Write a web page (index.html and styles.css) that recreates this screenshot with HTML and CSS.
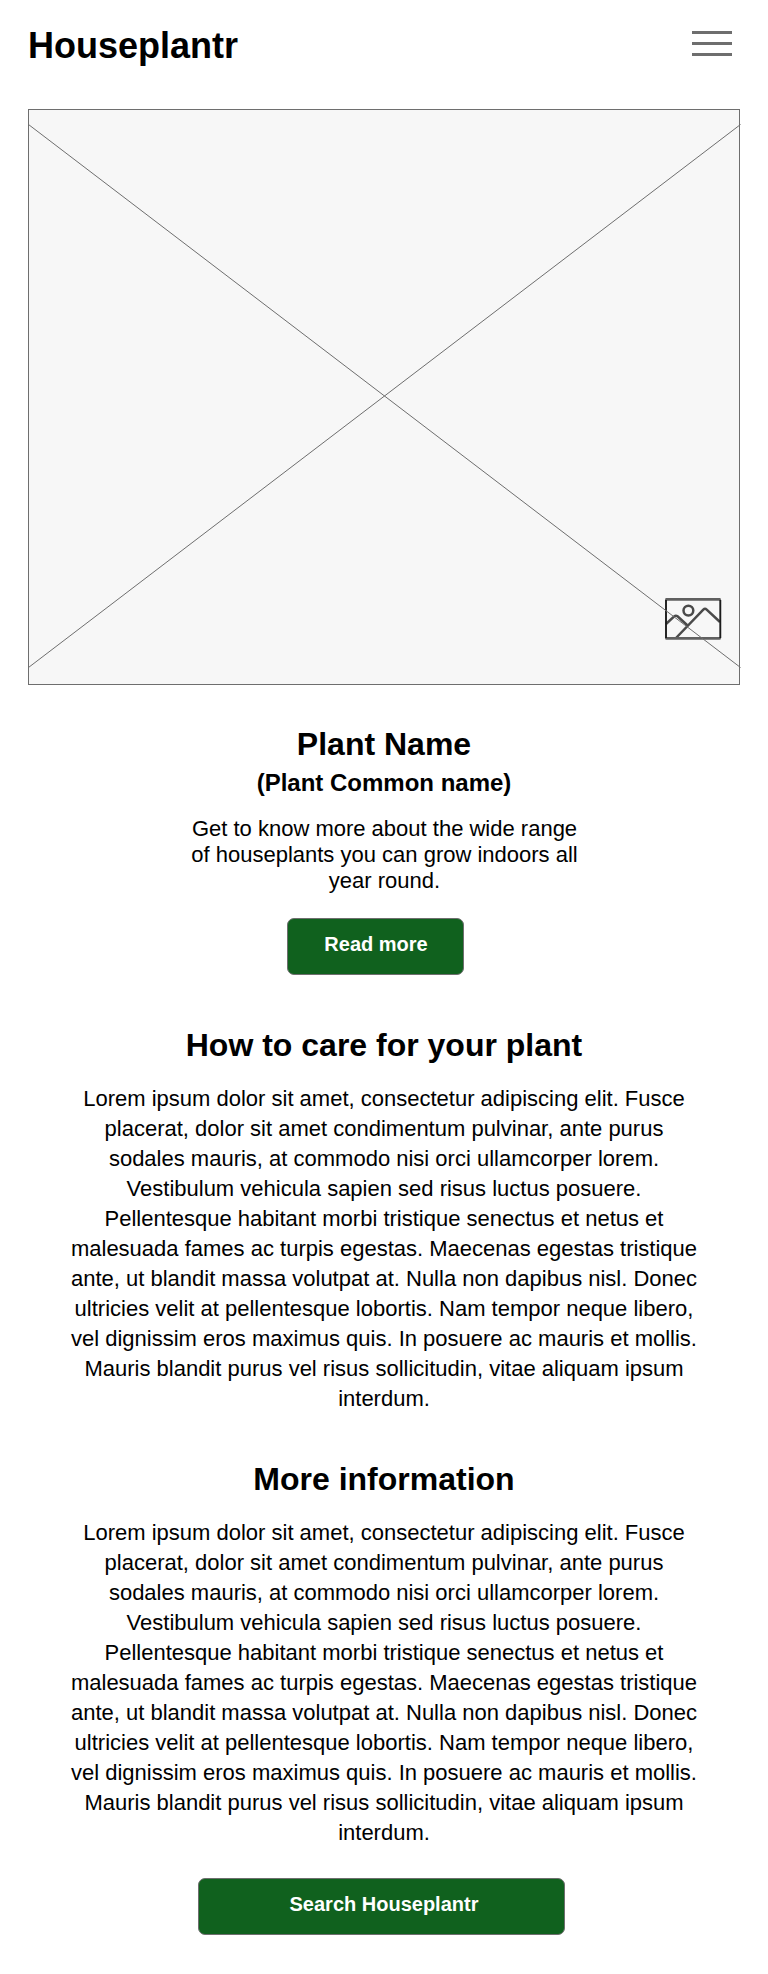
FILE: index.html
```html
<!DOCTYPE html>
<html lang="en">
<head>
<meta charset="utf-8">
<title>Houseplantr</title>
<link rel="stylesheet" href="styles.css">
</head>
<body>
<header class="header">
  <div class="logo">Houseplantr</div>
  <button class="menu" aria-label="Menu"><span class="bar"></span><span class="bar"></span><span class="bar"></span></button>
</header>
<main class="main">
  <svg class="hero" viewBox="0 0 712 576" width="712" height="576" aria-hidden="true">
    <rect class="hero-frame" x="0.5" y="0.5" width="711" height="575"/>
    <g class="hero-icon">
      <path d="M638 515l8.2-7.6q1.6-1.4 3.3-.1l9.8 8.9"/>
      <path d="M648 529L675.3 500.6q1.7-1.6 3.4 0L692 513"/>
      <circle cx="660.4" cy="501.6" r="4.9"/>
      <path class="icon-rail" d="M638.5 490.4h53M638.5 529.4h53"/>
      <path class="icon-edge" d="M638 491v38M692.3 491v38"/>
    </g>
    <path class="hero-cross" d="M0.5 15.5L712.5 558.5M0.5 558.5L712.5 15.5"/>
  </svg>
  <section class="intro">
    <h1 class="title">Plant Name</h1>
    <h2 class="subtitle">(Plant Common name)</h2>
    <p class="summary">Get to know more about the wide range of houseplants you can grow indoors all year round.</p>
    <a class="button button-read">Read more</a>
  </section>
  <section class="section">
    <h2 class="title">How to care for your plant</h2>
    <p class="copy">Lorem ipsum dolor sit amet, consectetur adipiscing elit. Fusce placerat, dolor sit amet condimentum pulvinar, ante purus sodales mauris, at commodo nisi orci ullamcorper lorem. Vestibulum vehicula sapien sed risus luctus posuere. Pellentesque habitant morbi tristique senectus et netus et malesuada fames ac turpis egestas. Maecenas egestas tristique ante, ut blandit massa volutpat at. Nulla non dapibus nisl. Donec ultricies velit at pellentesque lobortis. Nam tempor neque libero, vel dignissim eros maximus quis. In posuere ac mauris et mollis. Mauris blandit purus vel risus sollicitudin, vitae aliquam ipsum interdum.</p>
  </section>
  <section class="section section-more">
    <h2 class="title">More information</h2>
    <p class="copy">Lorem ipsum dolor sit amet, consectetur adipiscing elit. Fusce placerat, dolor sit amet condimentum pulvinar, ante purus sodales mauris, at commodo nisi orci ullamcorper lorem. Vestibulum vehicula sapien sed risus luctus posuere. Pellentesque habitant morbi tristique senectus et netus et malesuada fames ac turpis egestas. Maecenas egestas tristique ante, ut blandit massa volutpat at. Nulla non dapibus nisl. Donec ultricies velit at pellentesque lobortis. Nam tempor neque libero, vel dignissim eros maximus quis. In posuere ac mauris et mollis. Mauris blandit purus vel risus sollicitudin, vitae aliquam ipsum interdum.</p>
  </section>
  <a class="button button-search">Search Houseplantr</a>
</main>
</body>
</html>
```
FILE: styles.css
```css
* {
  box-sizing: border-box;
}

body {
  margin: 0;
  background: #fff;
  color: #000;
  font-family: "Liberation Sans", Arial, sans-serif;
}

h1, h2, p {
  margin: 0;
}

.header {
  display: flex;
  justify-content: space-between;
  align-items: flex-start;
  height: 109px;
  padding: 25px 36px 0 28px;
}

.logo {
  font-size: 36px;
  font-weight: bold;
  line-height: 41px;
}

.menu {
  display: flex;
  flex-direction: column;
  gap: 8px;
  width: 40px;
  margin-top: 6px;
  padding: 0;
  border: 0;
  background: none;
}

.bar {
  height: 3px;
  background: #6e6e6e;
}

.main {
  display: flex;
  flex-direction: column;
  align-items: center;
}

.hero {
  display: block;
  overflow: visible;
}

.hero-frame {
  fill: #f7f7f7;
  stroke: #6e6e6e;
}

.hero-cross {
  fill: none;
  stroke: #6e6e6e;
  stroke-width: 1;
}

.hero-icon {
  fill: none;
  stroke: #4a4a4a;
  stroke-width: 2.5;
}

.icon-edge {
  stroke: #1c1c1c;
  stroke-width: 1.9;
}

.icon-rail {
  stroke: #606060;
  stroke-width: 2.9;
  stroke-linecap: round;
}

.intro,
.section {
  display: flex;
  flex-direction: column;
  align-items: center;
  text-align: center;
}

.intro {
  padding-top: 41px;
}

.title {
  font-size: 32px;
  line-height: 36px;
}

.subtitle {
  margin-top: 7px;
  font-size: 24px;
  line-height: 27px;
}

.summary {
  width: 400px;
  margin: 20px 0 0 1px;
  font-size: 22px;
  line-height: 26px;
}

.button {
  height: 57px;
  border: 1px solid #6e6e6e;
  border-radius: 7px;
  background: #10611e;
  color: #fff;
  font-size: 20px;
  font-weight: bold;
  line-height: 51px;
  text-align: center;
}

.button-read {
  width: 177px;
  margin: 24px 17px 0 0;
  padding-left: 1px;
}

.section {
  padding-top: 52px;
}

.section-more {
  padding-top: 47px;
}

.copy {
  width: 632px;
  margin-top: 21px;
  font-size: 22px;
  line-height: 30px;
}

.button-search {
  width: 367px;
  margin: 30px 5px 0 0;
  padding-left: 5px;
}
```
